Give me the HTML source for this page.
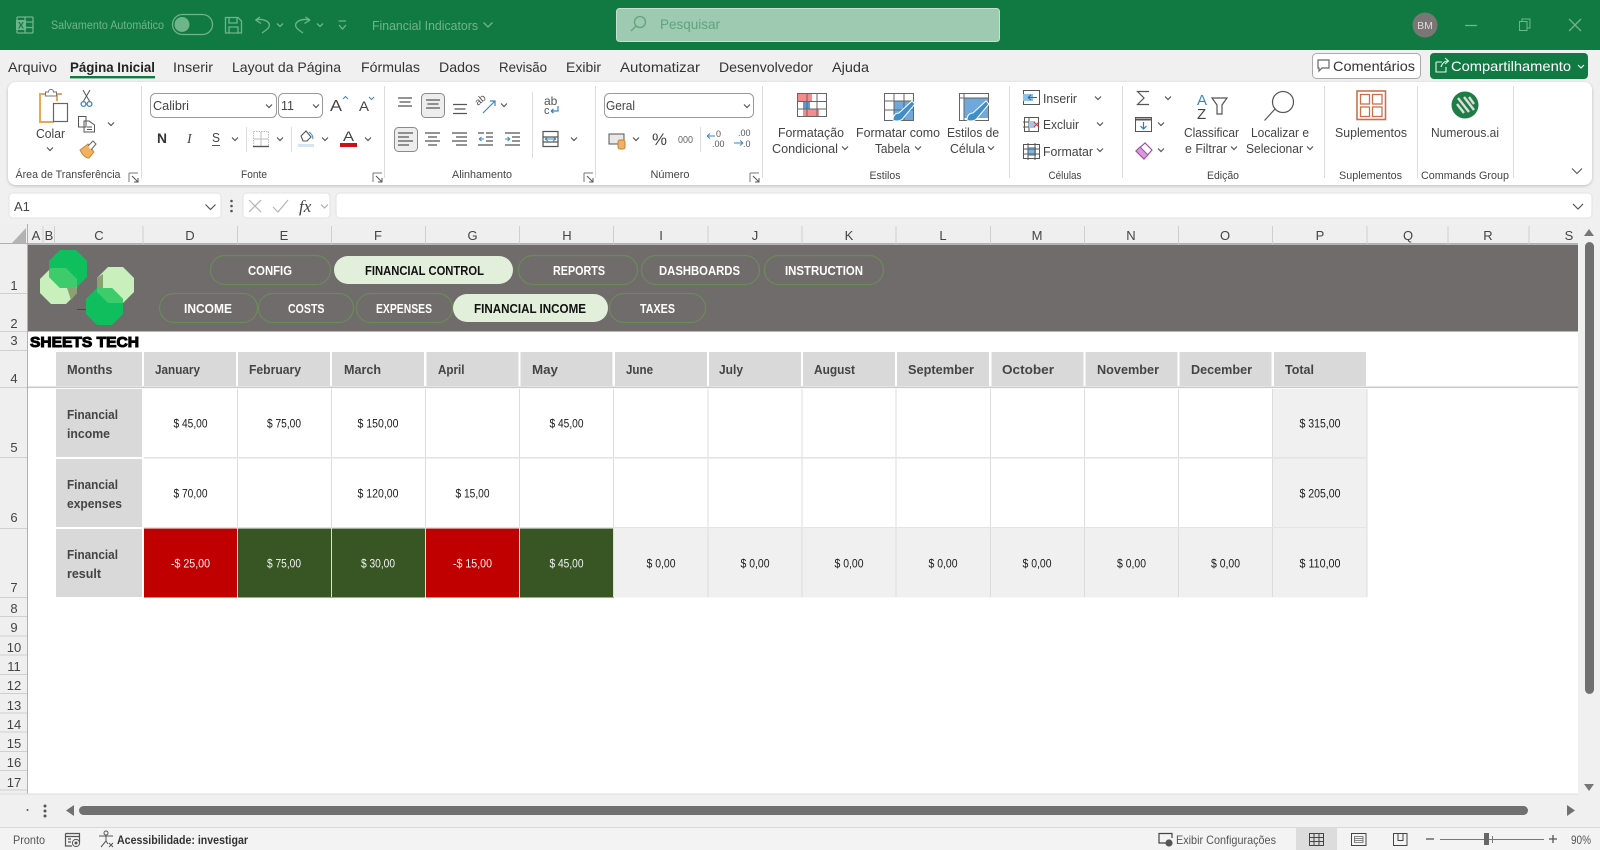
<!DOCTYPE html>
<html lang="pt">
<head>
<meta charset="utf-8">
<title>Financial Indicators</title>
<style>
html,body{margin:0;padding:0;background:#f0f0f0;width:1600px;height:850px;overflow:hidden}
svg{display:block;font-family:"Liberation Sans",sans-serif}
text{fill:#3c3c3c}
.tb{font-size:11.5px;fill:#6fb58c}
.tab{font-size:14px;fill:#333}
.r{font-size:12.5px;fill:#444}
.g{font-size:11px;fill:#444;text-anchor:middle}
.col{font-size:13px;fill:#444;text-anchor:middle}
.row{font-size:13px;fill:#444;text-anchor:middle}
.mh{font-size:13px;font-weight:bold;fill:#444}
.lb{font-size:13px;font-weight:bold;fill:#444}
.v{font-size:11.5px;fill:#1a1a1a;text-anchor:middle}
.w{font-size:11.5px;fill:#f2f2f2;text-anchor:middle}
.b{font-size:12.5px;font-weight:bold;fill:#fff}
.bs{font-size:12.5px;font-weight:bold;fill:#111}
.st{font-size:12px;fill:#555}
.ch{fill:none;stroke:#555;stroke-width:1.2}
.ic{fill:none;stroke:#666;stroke-width:1.2}
.tbi{fill:none;stroke:#6fb58c;stroke-width:1.3}
</style>
</head>
<body>
<svg width="1600" height="850" viewBox="0 0 1600 850" xmlns="http://www.w3.org/2000/svg">
<defs>
<path id="c" d="M-3 -1.5L0 1.5L3 -1.5" class="ch"/>
<path id="tc" d="M-3 -1.5L0 1.5L3 -1.5" class="tbi"/>
<g id="lau"><path d="M0 0H9M0 0V9" fill="none" stroke="#777"/><path d="M3 3L9 9M9 5V9H5" fill="none" stroke="#555"/></g>
<filter id="sh" x="-2%" y="-10%" width="104%" height="125%"><feDropShadow dx="0" dy="1" stdDeviation="1.5" flood-color="#000" flood-opacity=".22"/></filter>
<clipPath id="cpa"><polygon points="60,250 76,250 87,261 87,277 76,288 60,288 49,277 49,261"/></clipPath>
</defs>

<!-- Title bar -->
<rect x="0" y="0" width="1600" height="50" fill="#117a43"/>
<g class="tbi">
<rect x="17" y="17" width="16" height="16" rx="1"/><path d="M25 17V33M25 22H33M25 27.5H33"/>
</g>
<rect x="16" y="20" width="10" height="10" fill="#6fb58c"/>
<text x="18" y="28.5" style="font-size:9px;font-weight:bold;fill:#117a43">X</text>
<text x="51" y="29" class="tb" textLength="113" lengthAdjust="spacingAndGlyphs">Salvamento Automático</text>
<rect x="172.5" y="14.5" width="40" height="20" rx="10" class="tbi"/><circle cx="182" cy="24.5" r="7.5" fill="#6fb58c"/>
<g class="tbi">
<path d="M225.5 17.5H238L241.5 21V33H225.5Z"/><path d="M229 17.5V23H237V17.5M229 33V27H238V33"/>
<path d="M255.5 20L260 17M255.5 20L261 23.5M256 20C264 18 271 22 269 27C268 29 265 31 262 33"/>
<path d="M310 20L305.5 17M310 20L304.5 23.5M309.5 20C301 18 294 22 296 27C297 29 300 31 303 33"/>
<path d="M338.5 21H346M339 25L342.5 29L346 25"/>
</g>
<use href="#tc" x="280" y="25"/><use href="#tc" x="320" y="25"/>
<text x="372" y="30" style="font-size:13px;fill:#6fb58c" textLength="106" lengthAdjust="spacingAndGlyphs">Financial Indicators</text>
<path d="M483.5 22.5L488 27L492.5 22.5" class="tbi"/>
<rect x="616.5" y="8.5" width="383" height="33" rx="3" fill="#9dcab0" stroke="#c5e0d0"/>
<circle cx="640" cy="22" r="5.5" fill="none" stroke="#5fa47d" stroke-width="1.3"/><path d="M636 26L631 31" stroke="#5fa47d" stroke-width="1.3"/>
<text x="660" y="29" style="font-size:14px;fill:#5fa47d" textLength="60" lengthAdjust="spacingAndGlyphs">Pesquisar</text>
<circle cx="1425" cy="25" r="12.5" fill="#7b7676"/>
<text x="1425" y="29" style="font-size:10.5px;fill:#ddd;text-anchor:middle">BM</text>
<path d="M1465 25.5H1477" class="tbi"/>
<path d="M1519.5 21.5H1527V30.5H1519.5ZM1522 21V19H1530V28H1527" class="tbi" style="stroke-width:1"/>
<path d="M1569 19L1581 31M1581 19L1569 31" class="tbi"/>

<!-- Tabs -->
<rect x="0" y="50" width="1600" height="175" fill="#f0f0f0"/>
<text x="8" y="72" class="tab" textLength="49" lengthAdjust="spacingAndGlyphs">Arquivo</text>
<text x="70" y="72" class="tab" style="font-weight:bold;fill:#222" textLength="85" lengthAdjust="spacingAndGlyphs">Página Inicial</text>
<rect x="70" y="76" width="85" height="2.4" fill="#117a43"/>
<text x="173" y="72" class="tab" textLength="40" lengthAdjust="spacingAndGlyphs">Inserir</text>
<text x="232" y="72" class="tab" textLength="109" lengthAdjust="spacingAndGlyphs">Layout da Página</text>
<text x="361" y="72" class="tab" textLength="59" lengthAdjust="spacingAndGlyphs">Fórmulas</text>
<text x="439" y="72" class="tab" textLength="41" lengthAdjust="spacingAndGlyphs">Dados</text>
<text x="499" y="72" class="tab" textLength="48" lengthAdjust="spacingAndGlyphs">Revisão</text>
<text x="566" y="72" class="tab" textLength="35" lengthAdjust="spacingAndGlyphs">Exibir</text>
<text x="620" y="72" class="tab" textLength="80" lengthAdjust="spacingAndGlyphs">Automatizar</text>
<text x="719" y="72" class="tab" textLength="94" lengthAdjust="spacingAndGlyphs">Desenvolvedor</text>
<text x="832" y="72" class="tab" textLength="37" lengthAdjust="spacingAndGlyphs">Ajuda</text>

<rect x="1312.5" y="53.5" width="108" height="25" rx="4" fill="#fff" stroke="#aaa"/>
<path d="M1318 60H1329V68H1322L1319 71V68H1318Z" class="ic"/>
<text x="1333" y="71" class="tab" style="fill:#333" textLength="82" lengthAdjust="spacingAndGlyphs">Comentários</text>
<rect x="1430" y="53" width="158" height="26" rx="4" fill="#117a43"/>
<path d="M1436 62H1442M1436 62V72H1446V67M1441 67C1442 63 1445 61 1448 61M1445 58L1448.5 61L1445 64" fill="none" stroke="#e6f2eb" stroke-width="1.1"/>
<text x="1451" y="71" class="tab" style="fill:#fff" textLength="120" lengthAdjust="spacingAndGlyphs">Compartilhamento</text>
<path d="M1578 65L1581 68L1584 65" fill="none" stroke="#fff" stroke-width="1.1"/>

<!-- Ribbon card -->
<rect x="8" y="82" width="1584" height="103" rx="8" fill="#fff" filter="url(#sh)"/>
<g stroke="#dcdcdc" stroke-width="1">
<path d="M141.5 86V178M384.5 86V178M595.5 86V178M762.5 86V178M1009.5 86V178M1122.5 86V178M1324.5 86V178M1417.5 86V178M1513.5 86V178"/>
<path d="M246.5 127V152M291.5 127V152M532.5 92V158M700.5 127V152"/>
</g>

<!-- clipboard -->
<path d="M45 94H40V122H54M62 94H57V101" fill="none" stroke="#e4a857" stroke-width="2"/>
<path d="M45.5 96V92H48.5C48.5 88.5 53.5 88.5 53.5 92H56.5V96Z" fill="#fff" stroke="#777"/>
<rect x="53.5" y="103.5" width="14" height="18" fill="#fff" stroke="#666" stroke-width="1.2"/>
<path d="M83 90L90 102M90 90L83 102" stroke="#555" fill="none"/>
<circle cx="83.5" cy="104" r="2.4" fill="none" stroke="#3b86bf" stroke-width="1.3"/><circle cx="89.5" cy="104" r="2.4" fill="none" stroke="#3b86bf" stroke-width="1.3"/>
<path d="M78.5 116.5H86V127H78.5ZM84 121H89L94.5 125V132H84Z" fill="#fff" stroke="#555"/><path d="M87 127H92M87 129.5H92" stroke="#555"/>
<use href="#c" x="111" y="124"/>
<path d="M80 150L88 144L94 152L89 158C85 158 82 154 80 150Z" fill="#f1b15f" stroke="#c98a3a"/><path d="M88 146L93 141L96 144L91 150" fill="#fff" stroke="#666"/>
<text x="36" y="138" class="r" textLength="29" lengthAdjust="spacingAndGlyphs">Colar</text>
<use href="#c" x="50" y="149"/>
<text x="68" y="178" class="g" textLength="105" lengthAdjust="spacingAndGlyphs">Área de Transferência</text>
<use href="#lau" x="129" y="173"/>

<!-- font group -->
<rect x="150.5" y="93.5" width="126" height="24" rx="5" fill="#fff" stroke="#9a9a9a"/>
<text x="153" y="110" class="r" style="font-size:12.5px" textLength="36" lengthAdjust="spacingAndGlyphs">Calibri</text>
<use href="#c" x="269" y="106"/>
<rect x="278.5" y="93.5" width="44" height="24" rx="5" fill="#fff" stroke="#9a9a9a"/>
<text x="281" y="110" class="r" textLength="13" lengthAdjust="spacingAndGlyphs">11</text>
<use href="#c" x="316" y="106"/>
<text x="330" y="111" style="font-size:16px;fill:#444" textLength="12" lengthAdjust="spacingAndGlyphs">A</text>
<path d="M343 99L345.5 96.5L348 99" fill="none" stroke="#3b86bf"/>
<text x="359" y="111" style="font-size:14px;fill:#444" textLength="10" lengthAdjust="spacingAndGlyphs">A</text>
<path d="M369 97L371.5 99.5L374 97" fill="none" stroke="#3b86bf"/>
<text x="157" y="143" style="font-size:14px;font-weight:bold;fill:#333" textLength="10" lengthAdjust="spacingAndGlyphs">N</text>
<text x="187" y="143" style="font-size:14px;font-style:italic;font-family:'Liberation Serif',serif;fill:#444">I</text>
<text x="212" y="142" style="font-size:13px;fill:#444" textLength="8" lengthAdjust="spacingAndGlyphs">S</text><path d="M212 145.5H220" stroke="#555"/>
<use href="#c" x="235" y="139"/>
<rect x="253.5" y="131.5" width="15" height="15" fill="none" stroke="#bbb" stroke-dasharray="1.5 1"/><path d="M261 132V147M254 139H268" stroke="#bbb"/><path d="M253 146.5H269" stroke="#555" stroke-width="1.4"/>
<use href="#c" x="280" y="139"/>
<path d="M301 136L306 131L311 137L307 141H303Z" fill="none" stroke="#555" stroke-width="1.1"/><path d="M309 132C312 134 313 137 313 139" stroke="#3b86bf" fill="none"/>
<rect x="298" y="144" width="16" height="3" fill="#d5e4f0"/>
<use href="#c" x="325" y="139"/>
<text x="343" y="141" style="font-size:14px;fill:#444" textLength="11" lengthAdjust="spacingAndGlyphs">A</text>
<rect x="340" y="143" width="17" height="4" fill="#d20f17"/>
<use href="#c" x="368" y="139"/>
<text x="254" y="178" class="g" textLength="26" lengthAdjust="spacingAndGlyphs">Fonte</text>
<use href="#lau" x="373" y="173"/>

<!-- alignment -->
<rect x="421.5" y="93.5" width="23" height="24" rx="4" fill="#ededed" stroke="#8a8a8a"/>
<rect x="394.5" y="127.5" width="23" height="24" rx="4" fill="#ededed" stroke="#8a8a8a"/>
<g stroke="#555" stroke-width="1.2" fill="none">
<path d="M398 98H412M399.5 102H410.5M398 106H412"/>
<path d="M426 100H440M427.5 104H438.5M426 108H440"/>
<path d="M453 104.5H467M454.5 109H465.5M453 113.5H467"/>
<path d="M398 133H413M398 137H409M398 141H413M398 145H409"/>
<path d="M425 133H440M428 137H437M425 141H440M428 145H437"/>
<path d="M452 133H467M456 137H467M452 141H467M456 145H467"/>
<path d="M486 133H493M486 137H493M486 141H493M478 145H493M478 133H484"/>
<path d="M505 133H520M512 137H520M512 141H520M505 145H520"/>
<path d="M543 146.5H558V131.5H543ZM543 137H558M543 142H558"/>
</g>
<path d="M479 139H484M479 139L481.5 137M479 139L481.5 141M505 139H510M510 139L507.5 137M510 139L507.5 141" stroke="#3b86bf" fill="none"/>
<path d="M545 139H556M545 139L548 137M545 139L548 141M556 139L553 137M556 139L553 141" stroke="#3b86bf" fill="none"/>
<text x="478" y="106" style="font-size:10px;fill:#555" transform="rotate(-40 478 106)">ab</text>
<path d="M483 113L495 101M490 101H495V106" fill="none" stroke="#3b86bf" stroke-width="1.2"/>
<use href="#c" x="504" y="105"/>
<text x="544" y="105" style="font-size:12px;fill:#555">ab</text><text x="544" y="114" style="font-size:11px;fill:#555">c</text>
<path d="M558 106V111H551M551 111L553.5 109M551 111L553.5 113" fill="none" stroke="#3b86bf" stroke-width="1.2"/>
<use href="#c" x="574" y="139"/>
<text x="482" y="178" class="g" textLength="60" lengthAdjust="spacingAndGlyphs">Alinhamento</text>
<use href="#lau" x="584" y="173"/>

<!-- number -->
<rect x="604.5" y="93.5" width="149" height="24" rx="5" fill="#fff" stroke="#9a9a9a"/>
<text x="606" y="110" class="r" textLength="29" lengthAdjust="spacingAndGlyphs">Geral</text>
<use href="#c" x="747" y="106"/>
<rect x="609" y="134" width="15" height="10" fill="#e8e8e8" stroke="#555"/>
<rect x="618" y="140" width="7" height="9" rx="2" fill="#eeb26a" stroke="#c87f2e"/>
<use href="#c" x="636" y="139"/>
<text x="652" y="145" style="font-size:17px;fill:#444" textLength="15" lengthAdjust="spacingAndGlyphs">%</text>
<text x="678" y="143" style="font-size:10.5px;fill:#666" textLength="15" lengthAdjust="spacingAndGlyphs">000</text>
<text x="716" y="137" style="font-size:9px;fill:#555">0</text><text x="712" y="147" style="font-size:9px;fill:#555">.00</text>
<path d="M707 136H715M707 136L710 133.5M707 136L710 138.5" fill="none" stroke="#3b86bf"/>
<text x="738" y="136" style="font-size:9px;fill:#555">.00</text><text x="743" y="147" style="font-size:9px;fill:#555">.0</text>
<path d="M734 143H743M743 143L740 140.5M743 143L740 145.5" fill="none" stroke="#3b86bf"/>
<text x="670" y="178" class="g" textLength="39" lengthAdjust="spacingAndGlyphs">Número</text>
<use href="#lau" x="750" y="173"/>

<!-- styles -->
<rect x="797.5" y="93.5" width="29" height="23" fill="#fff" stroke="#666"/>
<rect x="798" y="94" width="14" height="8" fill="#f58a8f"/><rect x="803" y="101" width="7" height="8" fill="#5b9bd5"/><rect x="803" y="109" width="16" height="7" fill="#f58a8f"/>
<path d="M797 101.5H826M797 109H826M807 93V116M817 93V116" stroke="#666" fill="none"/>
<rect x="884.5" y="93.5" width="29" height="27" fill="#fff" stroke="#666"/>
<rect x="894" y="101" width="19" height="19" fill="#6fa8dc"/>
<path d="M884 101H913M884 110H913M894 93V120M904 93V120" stroke="#666" fill="none"/>
<path d="M893 120C893 115 896 113 899 113L912 101L915 104L904 117C902 121 896 122 893 120Z" fill="#3e8ecb" stroke="#fff"/>
<rect x="959.5" y="93.5" width="29" height="27" fill="#fff" stroke="#666"/>
<rect x="964" y="98" width="24" height="20" fill="#6fa8dc"/>
<path d="M959 98H988M964 93V120" stroke="#666" fill="none"/>
<path d="M967 120C967 115 970 113 973 113L986 101L989 104L978 117C976 121 970 122 967 120Z" fill="#3e8ecb" stroke="#fff"/>
<text x="778" y="137" class="r" textLength="66" lengthAdjust="spacingAndGlyphs">Formatação</text>
<text x="772" y="153" class="r" textLength="66" lengthAdjust="spacingAndGlyphs">Condicional</text><use href="#c" x="845" y="148"/>
<text x="856" y="137" class="r" textLength="84" lengthAdjust="spacingAndGlyphs">Formatar como</text>
<text x="875" y="153" class="r" textLength="35" lengthAdjust="spacingAndGlyphs">Tabela</text><use href="#c" x="918" y="148"/>
<text x="947" y="137" class="r" textLength="52" lengthAdjust="spacingAndGlyphs">Estilos de</text>
<text x="950" y="153" class="r" textLength="35" lengthAdjust="spacingAndGlyphs">Célula</text><use href="#c" x="991" y="148"/>
<text x="885" y="179" class="g" textLength="31" lengthAdjust="spacingAndGlyphs">Estilos</text>

<!-- cells -->
<rect x="1023.5" y="90.5" width="16" height="14" fill="#fff" stroke="#555"/><rect x="1023" y="94" width="10" height="7" fill="#8fc0e5"/><path d="M1028 97.5H1037M1028 97.5L1031 95M1028 97.5L1031 100" stroke="#1f6ea8" fill="none"/>
<text x="1043" y="103" class="r" textLength="34" lengthAdjust="spacingAndGlyphs">Inserir</text><use href="#c" x="1098" y="98"/>
<rect x="1024.5" y="117.5" width="14" height="14" fill="#fff" stroke="#555"/><path d="M1023 122H1035M1023 127H1035M1029 117V132" stroke="#555"/><rect x="1029" y="121" width="6" height="7" fill="#9fc9e8"/><path d="M1034 122L1039 127M1039 122L1034 127" stroke="#d6373d" stroke-width="1.2"/>
<text x="1043" y="129" class="r" textLength="36" lengthAdjust="spacingAndGlyphs">Excluir</text><use href="#c" x="1100" y="124"/>
<rect x="1023.5" y="144.5" width="16" height="14" fill="#fff" stroke="#555"/><rect x="1028" y="147" width="8" height="9" fill="#7fb7e0"/><path d="M1028 143V160M1035 143V160M1023 149H1040M1023 154H1040" stroke="#555"/>
<text x="1043" y="156" class="r" textLength="50" lengthAdjust="spacingAndGlyphs">Formatar</text><use href="#c" x="1100" y="150"/>
<text x="1065" y="179" class="g" textLength="33" lengthAdjust="spacingAndGlyphs">Células</text>

<!-- editing -->
<path d="M1149 91.5H1137.5L1144 98L1137.5 104.5H1149" fill="none" stroke="#555" stroke-width="1.2"/><use href="#c" x="1168" y="98"/>
<rect x="1135.5" y="117.5" width="16" height="14" fill="#fff" stroke="#555"/><path d="M1135 119.5H1152" stroke="#555" stroke-width="2"/><path d="M1143.5 122V129M1140.5 126L1143.5 129L1146.5 126" fill="none" stroke="#2f80bd" stroke-width="1.2"/><use href="#c" x="1161" y="124"/>
<path d="M1136 151L1145 143L1152 150L1144 159Z" fill="#fff" stroke="#a14fa8" stroke-width="1.2"/><path d="M1136 151L1140 147L1148 155L1144 159Z" fill="#d79ad9" stroke="#a14fa8"/><use href="#c" x="1161" y="150"/>
<text x="1197" y="105" style="font-size:15px;fill:#3b86bf">A</text><text x="1197" y="119" style="font-size:15px;fill:#444">Z</text>
<path d="M1212 98H1227L1222 105V114H1217V105Z" fill="#fff" stroke="#555" stroke-width="1.2"/>
<text x="1184" y="137" class="r" textLength="55" lengthAdjust="spacingAndGlyphs">Classificar</text>
<text x="1185" y="153" class="r" textLength="42" lengthAdjust="spacingAndGlyphs">e Filtrar</text><use href="#c" x="1234" y="148"/>
<circle cx="1283" cy="102" r="10.5" fill="#fff" stroke="#555" stroke-width="1.2"/><path d="M1275 109L1264.5 120.5" stroke="#555" stroke-width="1.2"/>
<text x="1251" y="137" class="r" textLength="58" lengthAdjust="spacingAndGlyphs">Localizar e</text>
<text x="1246" y="153" class="r" textLength="57" lengthAdjust="spacingAndGlyphs">Selecionar</text><use href="#c" x="1310" y="148"/>
<text x="1223" y="179" class="g" textLength="32" lengthAdjust="spacingAndGlyphs">Edição</text>

<!-- addins -->
<rect x="1357" y="91" width="28.5" height="28.5" fill="#fff" stroke="#c8714f" stroke-width="1.6"/>
<rect x="1360.5" y="94.5" width="9" height="9.5" fill="none" stroke="#c8714f" stroke-width="1.3"/><rect x="1372.5" y="94.5" width="9.5" height="9.5" fill="none" stroke="#c8714f" stroke-width="1.3"/><rect x="1360.5" y="107" width="9" height="9.5" fill="none" stroke="#c8714f" stroke-width="1.3"/><rect x="1372.5" y="107" width="9.5" height="9.5" fill="none" stroke="#c8714f" stroke-width="1.3"/>
<text x="1335" y="137" class="r" textLength="72" lengthAdjust="spacingAndGlyphs">Suplementos</text>
<text x="1370.5" y="179" class="g" textLength="63" lengthAdjust="spacingAndGlyphs">Suplementos</text>
<circle cx="1465" cy="105" r="13.5" fill="#1e7d45"/>
<path d="M1458 98L1469 112M1457 104L1464 113M1464 97L1474 110M1469 97L1474 104" stroke="#dcdcdc" stroke-width="2.4" fill="none"/>
<text x="1431" y="137" class="r" textLength="68" lengthAdjust="spacingAndGlyphs">Numerous.ai</text>
<text x="1465" y="179" class="g" textLength="88" lengthAdjust="spacingAndGlyphs">Commands Group</text>
<path d="M1572 168.5L1577 173.5L1582 168.5" fill="none" stroke="#555" stroke-width="1.1"/>

<!-- Formula bar -->
<rect x="9" y="193" width="212" height="25" rx="4" fill="#fff" stroke="#e2e2e2"/>
<text x="14" y="211" style="font-size:13px;fill:#444">A1</text>
<path d="M205.5 204.5L210.5 209.5L215.5 204.5" fill="none" stroke="#555" stroke-width="1.2"/>
<circle cx="231.5" cy="201" r="1.3" fill="#555"/><circle cx="231.5" cy="206" r="1.3" fill="#555"/><circle cx="231.5" cy="211" r="1.3" fill="#555"/>
<rect x="243" y="193" width="87" height="25" rx="4" fill="#fff" stroke="#e2e2e2"/>
<path d="M249 200L261 212M261 200L249 212" stroke="#b5b5b5" stroke-width="1.2"/>
<path d="M273 207L278 212L288 200" fill="none" stroke="#b5b5b5" stroke-width="1.2"/>
<text x="299" y="212" style="font-family:'Liberation Serif',serif;font-style:italic;font-size:17px;fill:#444">fx</text>
<path d="M321 204.5L324.5 208L328 204.5" fill="none" stroke="#aaa" stroke-width="1.1"/>
<rect x="336" y="193" width="1256" height="25" rx="4" fill="#fff" stroke="#e2e2e2"/>
<path d="M1573 204L1578 209L1583 204" fill="none" stroke="#555" stroke-width="1.2"/>

<!-- Grid -->
<rect x="0" y="224" width="1600" height="570" fill="#fff"/>
<rect x="0" y="224" width="1600" height="20" fill="#efefef"/>
<rect x="0" y="244" width="28" height="550" fill="#efefef"/>
<polygon points="26,228 26,243 12,243" fill="#b3b3b3"/>
<path d="M27.5 224V794" stroke="#b0b0b0" stroke-width="1"/>
<path d="M0 243.5H1578" stroke="#b0b0b0"/>
<g stroke="#cfcfcf" fill="none">
<path d="M43 226V244M54.5 226V244M143 226V244M237.5 226V244M331.5 226V244M425.5 226V244M519.5 226V244M613.5 226V244M708 226V244M802 226V244M896 226V244M990.5 226V244M1084.5 226V244M1178.5 226V244M1272.5 226V244M1367 226V244M1448 226V244M1529 226V244"/>
<path d="M0 293.5H27M0 331.5H27M0 350.5H27M0 387.5H27M0 457.5H27M0 528.5H27M0 597.5H27M0 616.5H27M0 636H27M0 655H27M0 674.5H27M0 693.5H27M0 713H27M0 732H27M0 751.5H27M0 770.5H27M0 790H27"/>
</g>
<g class="col">
<text x="36" y="240" class="col">A</text><text x="49" y="240" class="col">B</text><text x="99" y="240" class="col">C</text><text x="190" y="240" class="col">D</text><text x="284" y="240" class="col">E</text><text x="378" y="240" class="col">F</text><text x="472.5" y="240" class="col">G</text><text x="567" y="240" class="col">H</text><text x="661" y="240" class="col">I</text><text x="755" y="240" class="col">J</text><text x="849" y="240" class="col">K</text><text x="943" y="240" class="col">L</text><text x="1037" y="240" class="col">M</text><text x="1131" y="240" class="col">N</text><text x="1225" y="240" class="col">O</text><text x="1320" y="240" class="col">P</text><text x="1408" y="240" class="col">Q</text><text x="1488" y="240" class="col">R</text><text x="1569" y="240" class="col">S</text>
</g>
<text x="14" y="290" class="row">1</text><text x="14" y="328" class="row">2</text><text x="14" y="345" class="row">3</text><text x="14" y="383" class="row">4</text><text x="14" y="452" class="row">5</text><text x="14" y="522" class="row">6</text><text x="14" y="592" class="row">7</text><text x="14" y="613" class="row">8</text><text x="14" y="632" class="row">9</text><text x="14" y="652" class="row">10</text><text x="14" y="671" class="row">11</text><text x="14" y="690" class="row">12</text><text x="14" y="710" class="row">13</text><text x="14" y="729" class="row">14</text><text x="14" y="748" class="row">15</text><text x="14" y="767" class="row">16</text><text x="14" y="787" class="row">17</text>

<!-- Banner -->
<rect x="28" y="244.5" width="1550" height="87" fill="#716c6c"/>
<polygon points="51,268 66,268 77,279 77,293 66,304 51,304 40,293 40,279" fill="#c9efbd"/>
<polygon points="108,267 123,267 134,278 134,292 123,303 108,303 97,292 97,278" fill="#c9efbd"/>
<polygon points="60,250 76,250 87,261 87,277 76,288 60,288 49,277 49,261" fill="#0fbe5c"/>
<polygon points="97,288 112,288 123,299 123,314 112,325 97,325 86,314 86,299" fill="#0fbe5c"/>
<polygon points="51,268 66,268 77,279 77,293 66,304 51,304 40,293 40,279" fill="#3ecb6c" clip-path="url(#cpa)"/>
<polygon points="97,288 112,288 123,299 123,303 108,303 97,292" fill="#3ecb6c"/>
<polygon points="77,279 77,293 71,300 67,288 77,288" fill="#8aa272"/>
<polygon points="97,278 103,274 103,288 97,288" fill="#8aa272"/>
<path d="M77 309.5H86" stroke="#4a4747"/>

<g fill="none" stroke="#698b57" stroke-width="1.2">
<rect x="210.5" y="255.5" width="120" height="29" rx="14.5"/>
<rect x="518.5" y="255.5" width="119" height="29" rx="14.5"/>
<rect x="641.5" y="255.5" width="118" height="29" rx="14.5"/>
<rect x="764.5" y="255.5" width="119" height="29" rx="14.5"/>
<rect x="159.5" y="293.5" width="98" height="29" rx="14.5"/>
<rect x="258.5" y="293.5" width="95" height="29" rx="14.5"/>
<rect x="356.5" y="293.5" width="96" height="29" rx="14.5"/>
<rect x="609.5" y="293.5" width="96" height="29" rx="14.5"/>
</g>
<rect x="334" y="256" width="179" height="28" rx="14" fill="#e2efda"/>
<rect x="453" y="294" width="155" height="28" rx="14" fill="#e2efda"/>
<text x="248" y="275" class="b" textLength="44" lengthAdjust="spacingAndGlyphs">CONFIG</text>
<text x="365" y="275" class="bs" textLength="119" lengthAdjust="spacingAndGlyphs">FINANCIAL CONTROL</text>
<text x="553" y="275" class="b" textLength="52" lengthAdjust="spacingAndGlyphs">REPORTS</text>
<text x="659" y="275" class="b" textLength="81" lengthAdjust="spacingAndGlyphs">DASHBOARDS</text>
<text x="785" y="275" class="b" textLength="78" lengthAdjust="spacingAndGlyphs">INSTRUCTION</text>
<text x="184" y="313" class="b" textLength="48" lengthAdjust="spacingAndGlyphs">INCOME</text>
<text x="288" y="313" class="b" textLength="36.5" lengthAdjust="spacingAndGlyphs">COSTS</text>
<text x="376" y="313" class="b" textLength="56" lengthAdjust="spacingAndGlyphs">EXPENSES</text>
<text x="474" y="313" class="bs" textLength="112" lengthAdjust="spacingAndGlyphs">FINANCIAL INCOME</text>
<text x="640" y="313" class="b" textLength="35" lengthAdjust="spacingAndGlyphs">TAXES</text>
<text x="30" y="347" style="font-size:15px;font-weight:bold;fill:#000;stroke:#000;stroke-width:1" textLength="109" lengthAdjust="spacingAndGlyphs">SHEETS TECH</text>

<!-- Table fills -->
<g fill="#d9d9d9">
<rect x="56" y="352" width="86" height="34"/><rect x="144" y="352" width="92" height="34"/><rect x="238" y="352" width="92" height="34"/><rect x="332" y="352" width="92" height="34"/><rect x="426.5" y="352" width="92" height="34"/><rect x="520.5" y="352" width="92" height="34"/><rect x="615" y="352" width="92" height="34"/><rect x="709" y="352" width="92" height="34"/><rect x="803" y="352" width="92" height="34"/><rect x="897" y="352" width="92" height="34"/><rect x="991.5" y="352" width="92" height="34"/><rect x="1085.5" y="352" width="92" height="34"/><rect x="1179.5" y="352" width="92" height="34"/><rect x="1274" y="352" width="92" height="34"/>
<rect x="56" y="389" width="86" height="68"/><rect x="56" y="459" width="86" height="68"/><rect x="56" y="529" width="86" height="68"/>
</g>
<rect x="28" y="386.5" width="1550" height="1.6" fill="#c9c9c9"/>
<rect x="1273" y="389" width="94" height="139" fill="#f0f0f0"/>
<rect x="614" y="529" width="753" height="68.5" fill="#f0f0f0"/>
<rect x="144" y="528" width="93" height="69.5" fill="#c00000"/>
<rect x="238" y="528" width="187" height="69.5" fill="#375623"/>
<rect x="426" y="528" width="93" height="69.5" fill="#c00000"/>
<rect x="520" y="528" width="94" height="69.5" fill="#375623"/>
<g stroke="#dcdcdc" fill="none">
<path d="M237.5 389V597M331.5 389V597M425.5 389V597M519.5 389V597M613.5 389V597M708 389V597M802 389V597M896 389V597M990.5 389V597M1084.5 389V597M1178.5 389V597M1272.5 389V597M1367 389V597"/>
</g>
<rect x="144" y="457" width="1223" height="1.6" fill="#e4e4e4"/>
<rect x="144" y="527" width="1223" height="1.6" fill="#e4e4e4"/>

<!-- Table header text -->
<text x="67" y="374" class="mh" textLength="45.5" lengthAdjust="spacingAndGlyphs">Months</text>
<text x="155" y="374" class="mh" textLength="45" lengthAdjust="spacingAndGlyphs">January</text>
<text x="249" y="374" class="mh" textLength="52" lengthAdjust="spacingAndGlyphs">February</text>
<text x="344" y="374" class="mh" textLength="37" lengthAdjust="spacingAndGlyphs">March</text>
<text x="438" y="374" class="mh" textLength="26.5" lengthAdjust="spacingAndGlyphs">April</text>
<text x="532" y="374" class="mh" textLength="26" lengthAdjust="spacingAndGlyphs">May</text>
<text x="626" y="374" class="mh" textLength="27" lengthAdjust="spacingAndGlyphs">June</text>
<text x="719" y="374" class="mh" textLength="24" lengthAdjust="spacingAndGlyphs">July</text>
<text x="814" y="374" class="mh" textLength="41" lengthAdjust="spacingAndGlyphs">August</text>
<text x="908" y="374" class="mh" textLength="66" lengthAdjust="spacingAndGlyphs">September</text>
<text x="1002" y="374" class="mh" textLength="52" lengthAdjust="spacingAndGlyphs">October</text>
<text x="1097" y="374" class="mh" textLength="62" lengthAdjust="spacingAndGlyphs">November</text>
<text x="1191" y="374" class="mh" textLength="61" lengthAdjust="spacingAndGlyphs">December</text>
<text x="1285" y="374" class="mh" textLength="29" lengthAdjust="spacingAndGlyphs">Total</text>

<text x="67" y="419" class="lb" textLength="51" lengthAdjust="spacingAndGlyphs">Financial</text>
<text x="67" y="438" class="lb" textLength="43" lengthAdjust="spacingAndGlyphs">income</text>
<text x="67" y="489" class="lb" textLength="51" lengthAdjust="spacingAndGlyphs">Financial</text>
<text x="67" y="508" class="lb" textLength="55" lengthAdjust="spacingAndGlyphs">expenses</text>
<text x="67" y="559" class="lb" textLength="51" lengthAdjust="spacingAndGlyphs">Financial</text>
<text x="67" y="578" class="lb" textLength="34" lengthAdjust="spacingAndGlyphs">result</text>

<!-- Values -->
<text x="190.5" y="427.5" class="v" textLength="34" lengthAdjust="spacingAndGlyphs">$ 45,00</text>
<text x="284" y="427.5" class="v" textLength="34" lengthAdjust="spacingAndGlyphs">$ 75,00</text>
<text x="378" y="427.5" class="v" textLength="41" lengthAdjust="spacingAndGlyphs">$ 150,00</text>
<text x="566.5" y="427.5" class="v" textLength="34" lengthAdjust="spacingAndGlyphs">$ 45,00</text>
<text x="1320" y="427.5" class="v" textLength="41" lengthAdjust="spacingAndGlyphs">$ 315,00</text>
<text x="190.5" y="497.5" class="v" textLength="34" lengthAdjust="spacingAndGlyphs">$ 70,00</text>
<text x="378" y="497.5" class="v" textLength="41" lengthAdjust="spacingAndGlyphs">$ 120,00</text>
<text x="472.5" y="497.5" class="v" textLength="34" lengthAdjust="spacingAndGlyphs">$ 15,00</text>
<text x="1320" y="497.5" class="v" textLength="41" lengthAdjust="spacingAndGlyphs">$ 205,00</text>
<text x="190.5" y="567.5" class="w" textLength="39" lengthAdjust="spacingAndGlyphs">-$ 25,00</text>
<text x="284" y="567.5" class="w" textLength="34" lengthAdjust="spacingAndGlyphs">$ 75,00</text>
<text x="378" y="567.5" class="w" textLength="34" lengthAdjust="spacingAndGlyphs">$ 30,00</text>
<text x="472.5" y="567.5" class="w" textLength="39" lengthAdjust="spacingAndGlyphs">-$ 15,00</text>
<text x="566.5" y="567.5" class="w" textLength="34" lengthAdjust="spacingAndGlyphs">$ 45,00</text>
<text x="661" y="567.5" class="v" textLength="29" lengthAdjust="spacingAndGlyphs">$ 0,00</text>
<text x="755" y="567.5" class="v" textLength="29" lengthAdjust="spacingAndGlyphs">$ 0,00</text>
<text x="849" y="567.5" class="v" textLength="29" lengthAdjust="spacingAndGlyphs">$ 0,00</text>
<text x="943" y="567.5" class="v" textLength="29" lengthAdjust="spacingAndGlyphs">$ 0,00</text>
<text x="1037" y="567.5" class="v" textLength="29" lengthAdjust="spacingAndGlyphs">$ 0,00</text>
<text x="1131.5" y="567.5" class="v" textLength="29" lengthAdjust="spacingAndGlyphs">$ 0,00</text>
<text x="1225.5" y="567.5" class="v" textLength="29" lengthAdjust="spacingAndGlyphs">$ 0,00</text>
<text x="1320" y="567.5" class="v" textLength="41" lengthAdjust="spacingAndGlyphs">$ 110,00</text>

<!-- Vertical scrollbar -->
<rect x="1578" y="224" width="22" height="604" fill="#f0f0f0"/>
<polygon points="1589,229 1594,236 1584,236" fill="#777"/>
<rect x="1585" y="242" width="9" height="452" rx="4.5" fill="#707070"/>
<polygon points="1589,791 1594,784 1584,784" fill="#777"/>

<!-- H-scroll area -->
<rect x="0" y="794" width="1600" height="33" fill="#f0f0f0"/>
<rect x="0" y="793.5" width="1578" height="1" fill="#dcdcdc"/>
<circle cx="27.5" cy="810" r="1" fill="#555"/>
<circle cx="45" cy="806" r="1.5" fill="#555"/><circle cx="45" cy="811" r="1.5" fill="#555"/><circle cx="45" cy="816" r="1.5" fill="#555"/>
<polygon points="66,810.5 74,805 74,816" fill="#707070"/>
<rect x="79" y="806" width="1449" height="9" rx="4.5" fill="#707070"/>
<polygon points="1575,810.5 1567,805 1567,816" fill="#707070"/>

<!-- Status bar -->
<rect x="0" y="827" width="1600" height="23" fill="#f3f3f3"/>
<rect x="0" y="827" width="1600" height="1" fill="#d9d9d9"/>
<text x="13" y="844" class="st" textLength="32" lengthAdjust="spacingAndGlyphs">Pronto</text>
<path d="M65.5 833.5H79.5V843M65.5 833.5V846H72M65.5 836.5H79.5M68 839H71M68 842H71" class="ic" style="stroke:#555"/><circle cx="76" cy="843" r="3.6" fill="none" stroke="#555"/><circle cx="76" cy="843" r="1.5" fill="#555"/>
<circle cx="106" cy="833" r="2" fill="none" stroke="#555"/><path d="M99 836H113M106 836V841M106 841L101 847M106 841L108 844M109 843L113 847M113 843L109 847" fill="none" stroke="#555"/>
<text x="117" y="844" style="font-size:12px;font-weight:bold;fill:#333" textLength="131" lengthAdjust="spacingAndGlyphs">Acessibilidade: investigar</text>
<path d="M1168 843H1159V833.5H1172V838" class="ic" style="stroke:#444"/><circle cx="1169" cy="843" r="3.6" fill="#555"/>
<text x="1176" y="844" class="st" textLength="100" lengthAdjust="spacingAndGlyphs">Exibir Configurações</text>
<rect x="1296" y="828" width="41" height="22" fill="#dcdcdc"/>
<path d="M1309.5 833.5H1323.5V845.5H1309.5ZM1309.5 837.5H1323.5M1309.5 841.5H1323.5M1314 833.5V845.5M1319 833.5V845.5" fill="none" stroke="#444"/>
<path d="M1351.5 833.5H1366V845.5H1351.5Z" fill="none" stroke="#444"/><path d="M1354.5 836.5H1363V842.5H1354.5ZM1354.5 838.5H1363M1354.5 840.5H1363" fill="none" stroke="#666" stroke-width=".8"/>
<path d="M1393.5 833.5H1407V845.5H1393.5ZM1398 833.5V840.5H1403V833.5" fill="none" stroke="#444"/>
<path d="M1426 839H1434" stroke="#555" stroke-width="1.3"/>
<path d="M1440 839.5H1544" stroke="#777"/>
<rect x="1484" y="833" width="5" height="12" fill="#666"/><path d="M1492.5 836V843" stroke="#777"/>
<path d="M1549 839H1557M1553 835V843" stroke="#555" stroke-width="1.3"/>
<text x="1571" y="844" class="st" textLength="20" lengthAdjust="spacingAndGlyphs">90%</text>
</svg>
</body>
</html>
